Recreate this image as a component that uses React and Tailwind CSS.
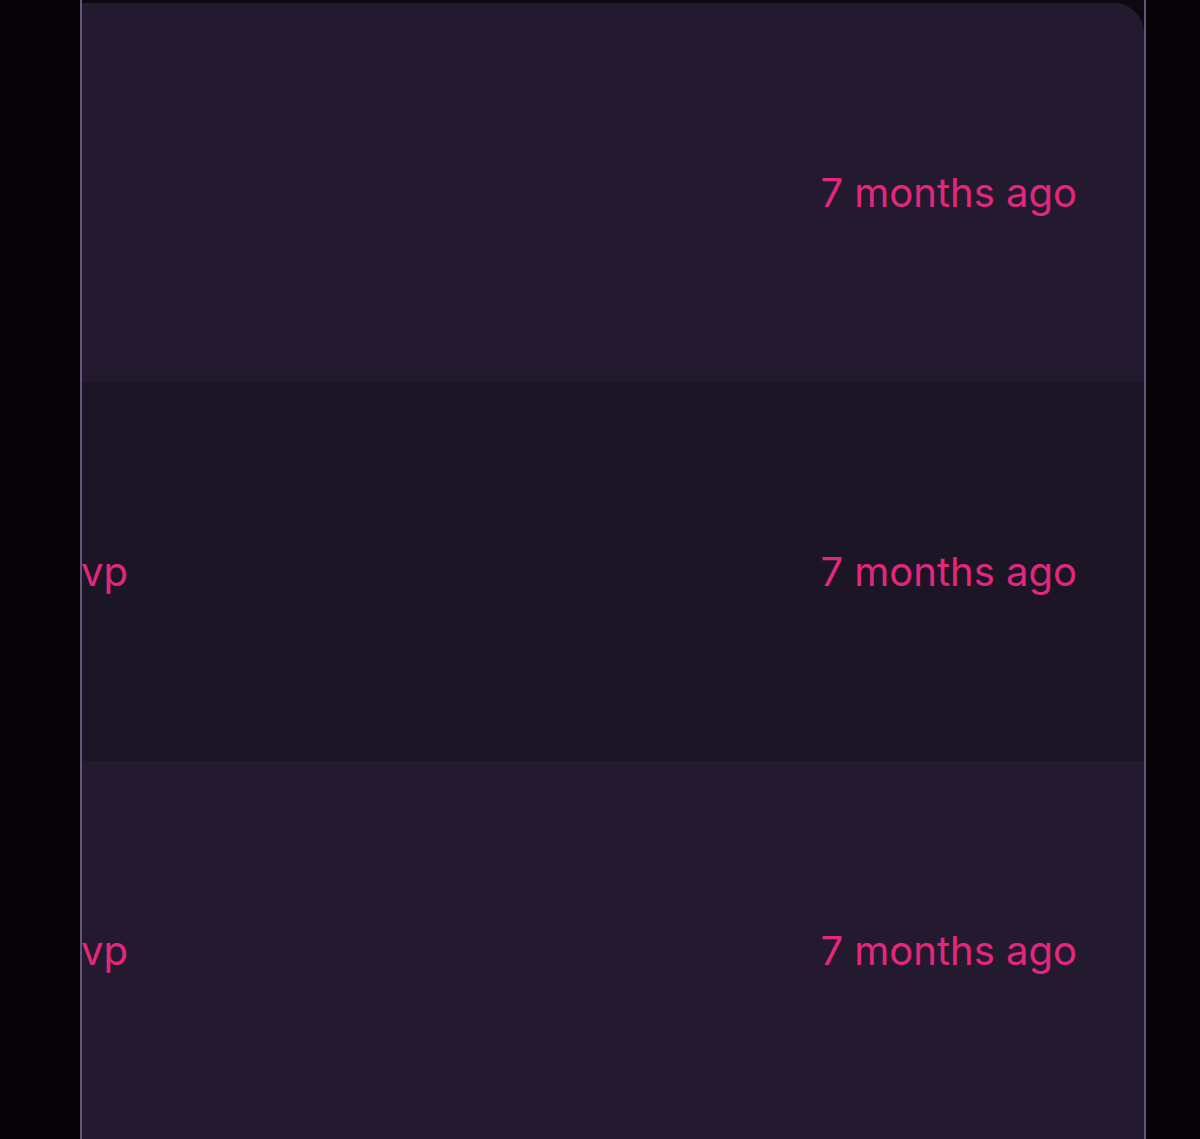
export default function App() {
  const rows = [
    { left: "", bg: "bg-[#241a2f]" },
    { left: "vp", bg: "bg-[#1c1526]" },
    { left: "vp", bg: "bg-[#241a2f]" },
  ];
  return (
    <div
      className="w-[1200px] h-[1139px] bg-[#060409] overflow-hidden"
      style={{ fontFamily: "Inter, 'Noto Sans', sans-serif" }}
    >
      <div className="ml-[80px] w-[1066px] h-full border-x-[2px] border-[#66567a] bg-[#0c0911] pt-[3px] overflow-hidden">
        <div className="rounded-tr-[30px] overflow-hidden">
          {rows.map((r, i) => (
            <div
              key={i}
              className={`${r.bg} h-[379px] flex items-center justify-between pr-[67px] text-[40px] text-[#e2287c] leading-none`}
            >
              <span className="-ml-[1px]">{r.left}</span>
              <span>7 months ago</span>
            </div>
          ))}
        </div>
      </div>
    </div>
  );
}
